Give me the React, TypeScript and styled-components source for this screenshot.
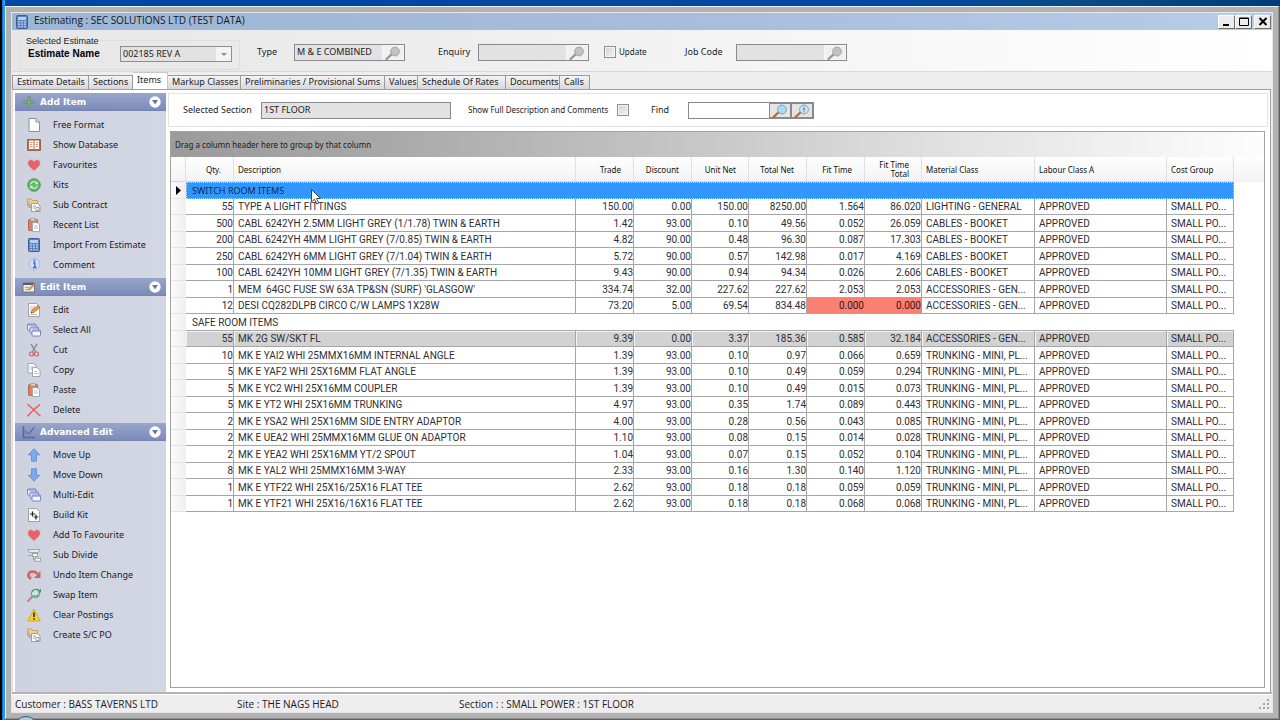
import React from "react";
import styled, { createGlobalStyle, css } from "styled-components";

const ui = '"Noto Sans", "DejaVu Sans", sans-serif';
const segoe = '"Open Sans", "Noto Sans", sans-serif';
const gridFont = 'Roboto, "Noto Sans", sans-serif';
const arial = '"Liberation Sans", Arial, sans-serif';

const GlobalStyle = createGlobalStyle`
  *, *::before, *::after { box-sizing: border-box; }
  body { margin: 0; font: 9px/12px ${ui}; color: #1b1b1f; }
  button, input, select { font: inherit; color: inherit; margin: 0; padding: 0; border-radius: 0; }
  svg { display: block; flex: none; }
`;

const Desktop = styled.div`
  position: relative;
  display: flex;
  min-height: 100vh;
  padding: 6px 1px 1px 5px;
  overflow: hidden;
  background:
    linear-gradient(90deg, #000 0 2px, #1470c8 2px 3px, #2a9ae6 3px 5px, transparent 5px),
    linear-gradient(#00000000 0 6px, #5c6064 6px),
    linear-gradient(90deg, #0046a4, #0048a2 70%, #0a4a84 85%, #003c78);
`;

const Window = styled.main`
  flex: 1;
  min-width: 0;
  display: flex;
  flex-direction: column;
  border: 1px solid #eef1f4;
  border-right-color: #8c8c8c;
  border-bottom-color: #8c8c8c;
  padding: 5px;
  background: #b2b2b2;
`;

const WindowInner = styled.div`
  flex: 1;
  display: flex;
  flex-direction: column;
  border: 1px solid #e4e6ea;
  background: #efefef;
`;

const TitleBar = styled.header`
  display: flex;
  align-items: center;
  height: 17px;
  padding: 0 1px 0 3px;
  gap: 5px;
  background: linear-gradient(90deg, #9cb6d6, #a6bcdc 50%, #b6cce8);
`;

const Title = styled.h1`
  flex: 1;
  margin: 0;
  height: 17px;
  font: 400 10px/15px ${segoe};
  color: #10161e;
`;

const CaptionButtons = styled.div`
  display: flex;
  button:last-child { margin-left: 2px; }
`;

const CaptionButton = styled.button`
  display: grid;
  place-items: center;
  width: 17px;
  height: 14px;
  border: 1px solid;
  border-color: #fff #6e6e6e #6e6e6e #fff;
  background: #ececec;
`;

const EstimateBar = styled.section`
  display: flex;
  align-items: center;
  height: 42px;
  padding: 3px 0 0 7px;
  border-bottom: 1px solid #d8d8da;
  background: linear-gradient(90deg, #e6e6e6, #eeeeee 35%, #f6f6f6 65%, #fff);
`;

const EstimateGroup = styled.fieldset`
  display: flex;
  width: 221px;
  height: 35px;
  margin: 0 17px 0 0;
  padding: 0 0 0 8px;
  border: 1px solid #dedede;
  border-radius: 2px;
  legend {
    margin-left: -3px;
    padding: 0 1px;
    font: 9px/12px ${arial};
  }
`;

const EstimateName = styled.label`
  display: flex;
  align-items: center;
  height: 14px;
  font: 700 10px/14px ${arial};
  > span:first-child { width: 92px; color: #000; }
`;

const SelectBox = styled.span`
  position: relative;
  display: block;
  width: 112px;
  height: 16px;
  font: 9px/14px ${ui};
  svg { position: absolute; right: 1px; top: 1px; pointer-events: none; }
  select {
    appearance: none;
    width: 100%;
    height: 16px;
    padding: 0 16px 0 2px;
    border: 1px solid #8e8e8e;
    background: #e2e2e2;
    color: #222;
    opacity: 1;
  }
`;

const BarLabel = styled.label<{ $width: number }>`
  width: ${p => p.$width}px;
  white-space: nowrap;
`;

const Field = styled.span<{ $width: number; $after?: number; $plain?: boolean }>`
  display: flex;
  width: ${p => p.$width}px;
  height: 17px;
  margin-right: ${p => p.$after ?? 0}px;
  border: 1px solid #8a8a8c;
  background: ${p => (p.$plain ? "#fff" : "#e2e2e2")};
  input {
    flex: 1;
    min-width: 0;
    border: 0;
    padding: 0 2px;
    background: transparent;
    outline: 0;
  }
`;

const LookupButton = styled.button<{ $active?: boolean }>`
  display: grid;
  place-items: center;
  width: 22px;
  border: 1px solid ${p => (p.$active ? "#8a8a8c" : "#f6f6f6")};
  background: ${p => (p.$active ? "#e4e4e2" : "#f0f0f0")};
`;

const Tick = styled.input`
  appearance: none;
  width: 12px;
  height: 12px;
  border: 1px solid #8e8f8f;
  background: linear-gradient(135deg, #d2d2d2, #f4f4f4);
  box-shadow: inset 0 0 0 1px #f6f6f6;
`;

const TickLabel = styled.label<{ $width: number }>`
  display: flex;
  align-items: center;
  justify-content: space-between;
  width: ${p => p.$width}px;
  white-space: nowrap;
  font-size: 8px;
`;

const Tabs = styled.nav`
  display: flex;
  align-items: flex-end;
  height: 17px;
  background: #eeeeee;
`;

const Tab = styled.button<{ $width: number; $active?: boolean }>`
  width: ${p => p.$width}px;
  height: ${p => (p.$active ? 17 : 14)}px;
  padding: 0 0 1px 4px;
  text-align: left;
  white-space: nowrap;
  border: 1px solid #9a9a9c;
  border-width: 1px 1px 0 0;
  background: linear-gradient(#f4f4f4, #d8d8dc);
  line-height: 12px;
  &:first-child { border-left-width: 1px; }
  ${p => p.$active && css`
    margin-bottom: -1px;
    height: 18px;
    padding-bottom: 3px;
    background: #fff;
    border-color: #c8c8ca;
  `}
`;

const TabBody = styled.div`
  flex: 1;
  display: flex;
  gap: 2px;
  margin-right: 1px;
  padding: 3px 2px 0 2px;
  border: 1px solid #a0a0a2;
  border-left-color: #dcdcdc;
  border-bottom: 0;
  background: #fff;
`;

const Sidebar = styled.aside`
  width: 151px;
  background: linear-gradient(90deg, #cfd3e0, #d3d7e3);
`;

const SideHeading = styled.h2`
  display: flex;
  align-items: center;
  gap: 4px;
  height: 18px;
  margin: 0;
  padding: 0 5px 0 7px;
  background: linear-gradient(#98a6cc, #7f8eba 85%, #7584b0);
  font: 700 9px/16px "DejaVu Sans", ${ui};
  color: #fff;
  span { flex: 1; }
`;

const CollapseButton = styled.button`
  border: 0;
  background: none;
`;

const SideList = styled.ul`
  list-style: none;
  margin: 0;
  padding: 4px 0 3px;
`;

const SideItem = styled.button`
  display: flex;
  align-items: center;
  gap: 12px;
  width: 100%;
  height: 20px;
  padding: 0 0 1px 12px;
  border: 0;
  background: none;
  text-align: left;
`;

const Content = styled.div`
  flex: 1;
  min-width: 0;
  display: flex;
  flex-direction: column;
  gap: 4px;
`;

const SectionBar = styled.section`
  display: flex;
  align-items: center;
  height: 34px;
  padding-left: 14px;
  border: 1px solid #e2e2e8;
`;

const Grid = styled.section`
  flex: 1;
  margin: 0 3px 4px 2px;
  border: 1px solid #a2a2a4;
  background: #fff;
`;

const GroupStrip = styled.div`
  height: 25px;
  padding-left: 4px;
  font-size: 8px;
  line-height: 25px;
  background: linear-gradient(90deg, #9b9b9b, #a9a9a9 20%, #c9c9c9 50%, #e0e0e0 70%, #fdfdfd);
`;

const HeaderFill = styled.div`
  background: linear-gradient(#fefefe, #f3f3f4) top / 100% 25px no-repeat;
`;

const Table = styled.table`
  table-layout: fixed;
  width: 1063px;
  border-collapse: separate;
  border-spacing: 0;
  font: 10px/15px ${gridFont};
  color: #2e2e34;
`;

const HeadCell = styled.th<{ $num?: boolean }>`
  height: 25px;
  padding: ${p => (p.$num ? "0 12px 0 0" : "0 0 0 4px")};
  border-right: 1px solid #e0e0e2;
  border-bottom: 1px solid #d6d6d8;
  font: 400 8px/9px ${ui};
  color: #111;
  text-align: ${p => (p.$num ? "right" : "left")};
`;

const Row = styled.tr<{ $shaded?: boolean }>`
  td, th { height: 16px; line-height: 14px; }
  &:nth-child(odd) > * { height: 17px; line-height: 15px; }
  ${p => p.$shaded && css`
    td { background: #d2d2d2; box-shadow: inset 1px 1px 0 #f4f4f4; }
  `}
`;

const Marker = styled.th`
  padding: 0 0 0 5px;
  border-bottom: 1px solid #e4e4e4;
  background: linear-gradient(90deg, #fbfbfb, #eeeeee);
`;

const Cell = styled.td<{ $num?: boolean; $alert?: boolean }>`
  padding: ${p => (p.$num ? "0" : "0 0 0 4px")};
  border-right: 1px solid #a6a6a8;
  border-bottom: 1px solid #a6a6a8;
  overflow: hidden;
  white-space: pre;
  text-align: ${p => (p.$num ? "right" : "left")};
  ${p => p.$alert && css`
    background: #fa8072;
    border-right-color: #fa8072;
    color: #3c1210;
  `}
`;

const GroupCell = styled.td<{ $selected?: boolean }>`
  padding: 0 0 0 6px;
  border-bottom: 1px solid #a6a6a8;
  ${p => p.$selected && css`
    background: #3296ff;
    border: 1px dotted #b8d8f8;
    padding-left: 5px;
    color: #0e2a4c;
    font: 9px/14px ${ui};
  `}
`;

const PointerAnchor = styled.span`
  position: relative;
  svg { position: absolute; left: 27px; top: 5px; z-index: 2; }
`;

const Footer = styled.footer`
  display: flex;
  align-items: center;
  height: 20px;
  padding: 2px 3px 0;
  border-top: 2px solid #b4b4b6;
  box-shadow: inset 0 1px 0 #fff;
  background: #f0edee;
  font: 10px/16px ${segoe};
`;

const FooterItem = styled.span<{ $width?: number }>`
  ${p => (p.$width ? css`width: ${p.$width}px;` : css`flex: 1;`)}
  white-space: nowrap;
`;

const StartOrb = styled.span`
  position: absolute;
  left: 14px;
  bottom: -20px;
  width: 24px;
  height: 24px;
  border-radius: 50%;
  border: 1px solid #2c5878;
  background: #a8cfe6;
`;

/* ---------- icons ---------- */

const Icon = ({ children, size = 14 }: { children: React.ReactNode; size?: number }) => (
  <svg width={size} height={size} viewBox="0 0 14 14" fill="none" aria-hidden="true">{children}</svg>
);

const CalcIcon = () => (
  <Icon>
    <rect x="1.5" y=".5" width="11" height="13" rx="1" fill="#5b82bd" stroke="#3c5f98" />
    <rect x="3" y="2" width="8" height="3" fill="#b8d0ee" />
    {[6, 8.5, 11].map(y => [3, 6, 9].map(x => <rect key={`${x}${y}`} x={x} y={y} width="2" height="1.5" fill="#a9c2e6" />))}
  </Icon>
);
const PageIcon = () => (
  <Icon><path d="M2 .5h7l3.5 3.5v9.500H2z" fill="#fdfdfd" stroke="#8f8f96" /><path d="M9 .5V4h3.500" fill="#e4e4e8" stroke="#8f8f96" /></Icon>
);
const BookIcon = () => (
  <Icon>
    <path d="M.5 1.500h13v11H.5z" fill="#c6694e" stroke="#a0604c" />
    <path d="M2 2.500h4.500v8.500H2zM7.500 2.500H12v8.500H7.500z" fill="#fbf6ee" />
    <path d="M3 4.500h2.500M3 6.500h2.500M3 8.500h2.500M8.500 4.500H11M8.500 6.500H11M8.500 8.500H11" stroke="#c8a890" />
  </Icon>
);
const HeartIcon = () => (
  <Icon><path d="M7 12.500C3 9.500 1 7.500 1 4.800 1 1.700 5 .8 7 3.800 9 .8 13 1.700 13 4.800c0 2.700-2 4.700-6 7.700z" fill="#e8626a" stroke="#e08288" strokeWidth=".6" /></Icon>
);
const KitIcon = () => (
  <Icon>
    <circle cx="7" cy="7" r="6.300" fill="#5fb868" stroke="#428a50" strokeWidth=".8" />
    <path d="M3.500 6.500c.6-3 4.500-3.700 6-1.500M10.500 7.500c-.6 3-4.500 3.700-6 1.500" stroke="#d4f2d4" strokeWidth="1.200" />
    <path d="M10.800 3v3.200H7.600zM3.200 11V7.800h3.200z" fill="#d4f2d4" />
  </Icon>
);
const ContractIcon = () => (
  <Icon>
    <path d="M.5 2.500v-1.500h4l1 1.500h5v5H.5z" fill="#f0cf94" stroke="#b8965c" strokeWidth=".8" />
    <path d="M4.500 5.500h6l2.500 2.500v5.500H4.500z" fill="#fafafa" stroke="#8e8a86" strokeWidth=".8" />
    <path d="M6 8h3M6 10h2M9 9.500v3h3v-3z" stroke="#8e8a86" strokeWidth=".8" />
    <path d="M2 3.500v6h2" stroke="#a09484" strokeWidth=".8" />
  </Icon>
);
const ClipboardIcon = () => (
  <Icon>
    <rect x="1.500" y="1.500" width="9" height="11" rx="1" fill="#dd7f5c" stroke="#b0674c" />
    <rect x="3.500" y=".5" width="5" height="2.500" rx=".5" fill="#ddd4c4" stroke="#8e8678" strokeWidth=".6" />
    <path d="M5.500 4.500h4.500l2.500 2.500v6.500h-7z" fill="#fdfdfd" stroke="#9a9aa2" strokeWidth=".8" />
    <path d="M7 8h3.500M7 10h4" stroke="#a8b0c4" strokeWidth=".8" />
  </Icon>
);
const InfoIcon = () => (
  <Icon>
    <circle cx="7.500" cy="6" r="5.500" fill="#cfdcf5" stroke="#98aede" strokeWidth=".8" />
    <path d="M5 10.500L6.500 14l2.500-3z" fill="#b4c6ec" />
    <path d="M6.300 5h1.500v4.500M6 9.500h3.500" stroke="#3f63c4" strokeWidth="1.300" /><circle cx="7.400" cy="2.800" r="1" fill="#3f63c4" />
  </Icon>
);
const EditIcon = () => (
  <Icon>
    <path d="M1.500.5h8l3 3v10h-11z" fill="#fafafa" stroke="#8f8f96" strokeWidth=".8" />
    <path d="M3 4h5M3 6h4M3 11.500h7" stroke="#a9a9b2" strokeWidth=".8" />
    <path d="M4 10l1-3 6-4.500 1.800 2L7 9.500z" fill="#ee9a44" stroke="#a8642c" strokeWidth=".6" /><path d="M4 10l.4-1.500 1.200 1z" fill="#332" />
  </Icon>
);
const CardsIcon = () => (
  <Icon>
    {[[.5, 1], [3, 4], [5, 7]].map(([x, y]) => (
      <g key={x}><rect x={x} y={y} width="8.500" height="6" rx=".8" fill="#f6f8fe" stroke="#6d79bd" strokeWidth=".9" /><path d={`M${x} ${y + 1}h8.500`} stroke="#7f8cd0" strokeWidth="1.200" /></g>
    ))}
  </Icon>
);
const CutIcon = () => (
  <Icon>
    <path d="M4 .8l4.800 8.400M10 .8L5.200 9.200" stroke="#8a8f98" strokeWidth="1.500" />
    <circle cx="4.500" cy="11" r="2" stroke="#d2606c" strokeWidth="1.200" /><circle cx="9.500" cy="11" r="2" stroke="#d2606c" strokeWidth="1.200" />
  </Icon>
);
const CopyIcon = () => (
  <Icon>
    <path d="M1 .5h5.500L9 3v7H1z" fill="#fafafa" stroke="#8f949e" strokeWidth=".8" /><path d="M2.500 4h4M2.500 6h4" stroke="#b2b6c0" strokeWidth=".8" />
    <path d="M5.500 4.500H10l3 3v6H5.500z" fill="#fff" stroke="#8f949e" strokeWidth=".8" /><path d="M7 8.500h3M7 10.500h4.500" stroke="#a8aec0" strokeWidth=".8" />
  </Icon>
);
const DeleteIcon = () => (
  <Icon><path d="M.8 1.500C5 5 9 9 13 12.800M12.500 1.800C8 5 4 9 1 12.800" stroke="#e4606a" strokeWidth="1.500" strokeLinecap="round" /></Icon>
);
const UpIcon = () => <Icon><path d="M7 .8l5.700 6H9.500v6.400h-5V6.800H1.300z" fill="#7ea8ee" stroke="#5d86d0" strokeWidth=".8" /></Icon>;
const DownIcon = () => <Icon><path d="M7 13.200l5.700-6H9.500V.8h-5v6.400H1.300z" fill="#7ea8ee" stroke="#5d86d0" strokeWidth=".8" /></Icon>;
const BuildIcon = () => (
  <Icon>
    <path d="M1.500.5h8l3 3v10h-11z" fill="#fcfcfc" stroke="#8f8f96" strokeWidth=".8" />
    <path d="M5.500 3.500v5M3 6h5M9 6.500v5M6.800 9h4.500" stroke="#222" strokeWidth="1.200" />
  </Icon>
);
const DivideIcon = () => (
  <Icon>
    <path d="M1 1.500h12l-1.500 3H2.500z" fill="#e8ece8" stroke="#90988f" strokeWidth=".8" />
    <rect x="5.500" y="5.500" width="5" height="3" fill="#f4f4f0" stroke="#90988f" strokeWidth=".8" />
    <rect x="8" y="10.200" width="5.500" height="3" fill="#f4f4f0" stroke="#90988f" strokeWidth=".8" />
    <path d="M1 7.500h4M6.500 9v3H8" stroke="#90988f" strokeWidth=".8" />
  </Icon>
);
const UndoIcon = () => (
  <Icon>
    <path d="M4 10.500C0 9 1 3.500 5.500 3.500c2.500 0 4 1 5 2.500" stroke="#cc6660" strokeWidth="2.600" />
    <path d="M13.500 3v7H7z" fill="#cc6660" /><path d="M5 10.500c-1.500-2 0-4.500 2.500-4" stroke="#dba39f" />
  </Icon>
);
const SwapIcon = () => (
  <Icon>
    <path d="M1 13l4.500-4.500" stroke="#cf7d76" strokeWidth="2" strokeLinecap="round" />
    <circle cx="8.500" cy="5.500" r="4" fill="#cdebe0" stroke="#5a9a8c" strokeWidth="1.100" />
    <path d="M5 4c2-3.500 6-3.500 8-1M13.500 1v3h-3M6.500 7c1.500 2 4 1.500 4.500-.5" stroke="#43997a" strokeWidth="1.100" />
  </Icon>
);
const WarnIcon = () => (
  <Icon><path d="M7 1l6.300 12H.7z" fill="#f6cf2c" stroke="#c9a32a" strokeWidth=".8" strokeLinejoin="round" /><path d="M7 4.500v4.500M7 10.200v1.600" stroke="#222" strokeWidth="1.500" /></Icon>
);
const PlusIcon = () => <Icon><path d="M7 1.500v11M1.500 7h11" stroke="#5d9468" strokeWidth="3" /><path d="M7 2v10M2 7h10" stroke="#86b884" strokeWidth="1.200" /></Icon>;
const EditCardIcon = () => (
  <Icon>
    <path d="M1 3h11.500v9H1z" fill="#f0ece0" stroke="#66665e" strokeWidth=".8" /><path d="M1 3h11.500v2H1z" fill="#55606c" />
    <path d="M3 7.500h4M3 9.500h5" stroke="#9a9686" strokeWidth=".8" /><path d="M6 9.500L12.500 3l1 1.200-6 6z" fill="#e2a050" stroke="#8a6030" strokeWidth=".4" />
  </Icon>
);
const ChartIcon = () => (
  <Icon>
    <path d="M1.500 1v11.500H13" stroke="#5c5cc4" strokeWidth="1.600" /><path d="M3 6l3.500 3.500L12.500 2" stroke="#666c92" strokeWidth="1.400" /><path d="M3 10l8-1.500" stroke="#8890c8" />
  </Icon>
);
const CollapseIcon = () => (
  <svg width="12" height="12" viewBox="0 0 12 12"><circle cx="6" cy="6" r="5.700" fill="#fff" /><path d="M3 4h6L6 8.500z" fill="#6776ac" /></svg>
);
const Magnifier = ({ colour, plus }: { colour?: boolean; plus?: boolean }) => (
  <svg width="18" height="15" viewBox="0 0 18 15" fill="none" aria-hidden="true">
    <path d="M2.500 13l5.500-5" stroke={colour ? "#b8682e" : "#929292"} strokeWidth="2.200" strokeLinecap="round" />
    <circle cx="11" cy="5.500" r="4.400" fill={colour ? (plus ? "#d2e8f2" : "#a9dcf4") : "#c2c2c2"} stroke={colour ? "#7aa2bc" : "#a4a4a4"} />
    {plus && <path d="M11 2.500v6M9.500 5h3" stroke="#6f8ca4" />}
  </svg>
);

/* ---------- data ---------- */

type Panel = { title: string; icon: React.ReactNode; items: [string, React.ReactNode][] };

const panels: Panel[] = [
  {
    title: "Add Item", icon: <PlusIcon />, items: [
      ["Free Format", <PageIcon />], ["Show Database", <BookIcon />], ["Favourites", <HeartIcon />], ["Kits", <KitIcon />],
      ["Sub Contract", <ContractIcon />], ["Recent List", <ClipboardIcon />], ["Import From Estimate", <CalcIcon />], ["Comment", <InfoIcon />],
    ],
  },
  {
    title: "Edit Item", icon: <EditCardIcon />, items: [
      ["Edit", <EditIcon />], ["Select All", <CardsIcon />], ["Cut", <CutIcon />], ["Copy", <CopyIcon />], ["Paste", <ClipboardIcon />], ["Delete", <DeleteIcon />],
    ],
  },
  {
    title: "Advanced Edit", icon: <ChartIcon />, items: [
      ["Move Up", <UpIcon />], ["Move Down", <DownIcon />], ["Multi-Edit", <CardsIcon />], ["Build Kit", <BuildIcon />],
      ["Add To Favourite", <HeartIcon />], ["Sub Divide", <DivideIcon />], ["Undo Item Change", <UndoIcon />],
      ["Swap Item", <SwapIcon />], ["Clear Postings", <WarnIcon />], ["Create S/C PO", <ContractIcon />],
    ],
  },
];

const tabs: [string, number][] = [
  ["Estimate Details", 77], ["Sections", 44], ["Items", 35], ["Markup Classes", 73], ["Preliminaries / Provisional Sums", 144],
  ["Values", 33], ["Schedule Of Rates", 88], ["Documents", 54], ["Calls", 30],
];

const columns: [string, number, boolean][] = [
  ["Qty.", 48, true], ["Description", 342, false], ["Trade", 58, true], ["Discount", 58, true], ["Unit Net", 57, true],
  ["Total Net", 58, true], ["Fit Time", 58, true], ["Fit Time Total", 57, true], ["Material Class", 113, false],
  ["Labour Class A", 132, false], ["Cost Group", 67, false],
];

const acc = "ACCESSORIES - GEN...";
const cab = "CABLES - BOOKET";
const trk = "TRUNKING - MINI, PL...";

const rows: string[][] = [
  ["SWITCH ROOM ITEMS"],
  ["55", "TYPE A LIGHT FITTINGS", "150.00", "0.00", "150.00", "8250.00", "1.564", "86.020", "LIGHTING - GENERAL"],
  ["500", "CABL 6242YH 2.5MM LIGHT GREY (1/1.78) TWIN & EARTH", "1.42", "93.00", "0.10", "49.56", "0.052", "26.059", cab],
  ["200", "CABL 6242YH 4MM LIGHT GREY (7/0.85) TWIN & EARTH", "4.82", "90.00", "0.48", "96.30", "0.087", "17.303", cab],
  ["250", "CABL 6242YH 6MM LIGHT GREY (7/1.04) TWIN & EARTH", "5.72", "90.00", "0.57", "142.98", "0.017", "4.169", cab],
  ["100", "CABL 6242YH 10MM LIGHT GREY (7/1.35) TWIN & EARTH", "9.43", "90.00", "0.94", "94.34", "0.026", "2.606", cab],
  ["1", "MEM  64GC FUSE SW 63A TP&SN (SURF) 'GLASGOW'", "334.74", "32.00", "227.62", "227.62", "2.053", "2.053", acc],
  ["12", "DESI CQ282DLPB CIRCO C/W LAMPS 1X28W", "73.20", "5.00", "69.54", "834.48", "0.000", "0.000", acc],
  ["SAFE ROOM ITEMS"],
  ["55", "MK 2G SW/SKT FL", "9.39", "0.00", "3.37", "185.36", "0.585", "32.184", acc],
  ["10", "MK E YAI2 WHI 25MMX16MM INTERNAL ANGLE", "1.39", "93.00", "0.10", "0.97", "0.066", "0.659", trk],
  ["5", "MK E YAF2 WHI 25X16MM FLAT ANGLE", "1.39", "93.00", "0.10", "0.49", "0.059", "0.294", trk],
  ["5", "MK E YC2 WHI 25X16MM COUPLER", "1.39", "93.00", "0.10", "0.49", "0.015", "0.073", trk],
  ["5", "MK E YT2 WHI 25X16MM TRUNKING", "4.97", "93.00", "0.35", "1.74", "0.089", "0.443", trk],
  ["2", "MK E YSA2 WHI 25X16MM SIDE ENTRY ADAPTOR", "4.00", "93.00", "0.28", "0.56", "0.043", "0.085", trk],
  ["2", "MK E UEA2 WHI 25MMX16MM GLUE ON ADAPTOR", "1.10", "93.00", "0.08", "0.15", "0.014", "0.028", trk],
  ["2", "MK E YEA2 WHI 25X16MM YT/2 SPOUT", "1.04", "93.00", "0.07", "0.15", "0.052", "0.104", trk],
  ["8", "MK E YAL2 WHI 25MMX16MM 3-WAY", "2.33", "93.00", "0.16", "1.30", "0.140", "1.120", trk],
  ["1", "MK E YTF22 WHI 25X16/25X16 FLAT TEE", "2.62", "93.00", "0.18", "0.18", "0.059", "0.059", trk],
  ["1", "MK E YTF21 WHI 25X16/16X16 FLAT TEE", "2.62", "93.00", "0.18", "0.18", "0.068", "0.068", trk],
];

const Lookup = ({ id, value = "", after }: { id: string; value?: string; after?: number }) => (
  <Field $width={111} $after={after}>
    <input id={id} readOnly defaultValue={value} />
    <LookupButton aria-label="Look up"><Magnifier /></LookupButton>
  </Field>
);

const ItemsTable = () => (
  <Table>
    <colgroup>
      <col style={{ width: 15 }} />
      {columns.map(([name, w]) => <col key={name} style={{ width: w }} />)}
    </colgroup>
    <thead>
      <tr>
        <HeadCell aria-label="Row marker" />
        {columns.map(([name, , num]) => <HeadCell key={name} scope="col" $num={num}>{name}</HeadCell>)}
      </tr>
    </thead>
    <tbody>
      {rows.map((row, i) =>
        row.length === 1 ? (
          <Row key={i}>
            <Marker>
              {i === 0 && <svg width="6" height="9" viewBox="0 0 6 9"><path d="M0 0l5 4.500L0 9z" fill="#000" /></svg>}
            </Marker>
            <GroupCell colSpan={11} $selected={i === 0}>
              {row[0]}
              {i === 0 && (
                <PointerAnchor>
                  <svg width="11" height="16" viewBox="0 0 11 16">
                    <path d="M.5.5v12.500l3-2.800 2.200 4.800 2-.9-2.200-4.600h4z" fill="#fff" stroke="#2c3440" strokeWidth=".9" />
                  </svg>
                </PointerAnchor>
              )}
            </GroupCell>
          </Row>
        ) : (
          <Row key={i} $shaded={i === 9}>
            <Marker />
            {[...row, "APPROVED", "SMALL PO..."].map((value, c) => (
              <Cell key={c} $num={columns[c][2]} $alert={value === "0.000"}>{value}</Cell>
            ))}
          </Row>
        )
      )}
    </tbody>
  </Table>
);

export default function App() {
  return (
    <Desktop>
      <GlobalStyle />
      <Window>
        <WindowInner>
          <TitleBar>
            <CalcIcon />
            <Title>Estimating : SEC SOLUTIONS LTD (TEST DATA)</Title>
            <CaptionButtons>
              <CaptionButton aria-label="Minimise"><svg width="10" height="9"><path d="M1 8h6" stroke="#000" strokeWidth="2" /></svg></CaptionButton>
              <CaptionButton aria-label="Maximise"><svg width="10" height="9"><path d="M.5 8.500V1h9v7.500zM.5 1.500h9" fill="none" stroke="#000" /></svg></CaptionButton>
              <CaptionButton aria-label="Close"><svg width="10" height="9"><path d="M1.500 1l7 7M8.500 1l-7 7" stroke="#000" strokeWidth="2" /></svg></CaptionButton>
            </CaptionButtons>
          </TitleBar>

          <EstimateBar>
            <EstimateGroup>
              <legend>Selected Estimate</legend>
              <EstimateName>
                <span>Estimate Name</span>
                <SelectBox>
                  <select defaultValue="002185 REV A"><option>002185 REV A</option></select>
                  <svg width="15" height="14" viewBox="0 0 15 14"><rect width="15" height="14" fill="#f4f4f4" /><path d="M5 6h6L8 9z" fill="#8c8c8c" /></svg>
                </SelectBox>
              </EstimateName>
            </EstimateGroup>
            <BarLabel $width={37} htmlFor="type">Type</BarLabel>
            <Lookup id="type" value="M & E COMBINED" after={33} />
            <BarLabel $width={40} htmlFor="enquiry">Enquiry</BarLabel>
            <Lookup id="enquiry" after={15} />
            <TickLabel $width={81}><Tick type="checkbox" /><BarLabel as="span" $width={66}>Update</BarLabel></TickLabel>
            <BarLabel $width={51} htmlFor="job">Job Code</BarLabel>
            <Lookup id="job" />
          </EstimateBar>

          <Tabs role="tablist">
            {tabs.map(([name, w]) => <Tab key={name} role="tab" $width={w} $active={name === "Items"} aria-selected={name === "Items"}>{name}</Tab>)}
          </Tabs>

          <TabBody>
            <Sidebar>
              {panels.map(panel => (
                <section key={panel.title}>
                  <SideHeading>
                    {panel.icon}
                    <span>{panel.title}</span>
                    <CollapseButton aria-label={`Collapse ${panel.title}`}><CollapseIcon /></CollapseButton>
                  </SideHeading>
                  <SideList>
                    {panel.items.map(([name, icon]) => <li key={name}><SideItem>{icon}{name}</SideItem></li>)}
                  </SideList>
                </section>
              ))}
            </Sidebar>

            <Content>
              <SectionBar>
                <BarLabel $width={78} htmlFor="section">Selected Section</BarLabel>
                <Field $width={190} $after={17}><input id="section" readOnly defaultValue="1ST FLOOR" /></Field>
                <TickLabel $width={161}>Show Full Description and Comments<Tick type="checkbox" /></TickLabel>
                <BarLabel as="span" $width={22} />
                <BarLabel $width={37} htmlFor="find">Find</BarLabel>
                <Field $width={126} $plain>
                  <input id="find" />
                  <LookupButton $active aria-label="Find"><Magnifier colour /></LookupButton>
                  <LookupButton $active aria-label="Find next"><Magnifier colour plus /></LookupButton>
                </Field>
              </SectionBar>
              <Grid>
                <GroupStrip>Drag a column header here to group by that column</GroupStrip>
                <HeaderFill><ItemsTable /></HeaderFill>
              </Grid>
            </Content>
          </TabBody>

          <Footer>
            <FooterItem $width={222}>Customer : BASS TAVERNS LTD</FooterItem>
            <FooterItem $width={222}>Site : THE NAGS HEAD</FooterItem>
            <FooterItem>Section : : SMALL POWER : 1ST FLOOR</FooterItem>
            <svg width="10" height="10" viewBox="0 0 10 10" fill="#a6a6a8">
              <path d="M8 0h2v2H8zM8 4h2v2H8zM4 4h2v2H4zM8 8h2v2H8zM4 8h2v2H4zM0 8h2v2H0z" />
            </svg>
          </Footer>
        </WindowInner>
      </Window>
      <StartOrb />
    </Desktop>
  );
}
